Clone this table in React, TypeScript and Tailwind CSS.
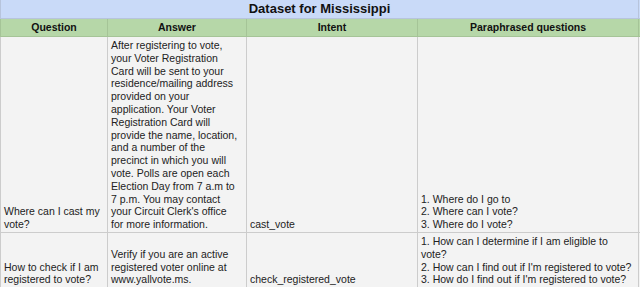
import React from "react";

interface Row {
  question: string;
  answer: string;
  intent: string;
  paraphrased: string[];
  height: string;
}

const rows: Row[] = [
  {
    question: "Where can I cast my vote?",
    answer:
      "After registering to vote, your Voter Registration Card will be sent to your residence/mailing address provided on your application. Your Voter Registration Card will provide the name, location, and a number of the precinct in which you will vote. Polls are open each Election Day from 7 a.m to 7 p.m. You may contact your Circuit Clerk's office for more information.",
    intent: "cast_vote",
    paraphrased: ["1. Where do I go to", "2. Where can I vote?", "3. Where do I vote?"],
    height: "h-[196px]",
  },
  {
    question: "How to check if I am registered to vote?",
    answer:
      "Verify if you are an active registered voter online at www.yallvote.ms.",
    intent: "check_registered_vote",
    paraphrased: [
      "1. How can I determine if I am eligible to vote?",
      "2. How can I find out if I'm registered to vote?",
      "3. How do I find out if I'm registered to vote?",
    ],
    height: "h-[54px]",
  },
];

const cell =
  "border border-[#cccccc] pl-[3px] pr-[4px] pt-[2px] pb-[1px] align-bottom text-left";

export default function App() {
  return (
    <div
      className="w-[640px] h-[287px] overflow-hidden bg-white text-[#222222]"
      style={{ fontFamily: '"Liberation Sans", Arial, sans-serif' }}
    >
      <table className="table-fixed border-collapse w-[678px] -mt-px text-[10.5px] leading-[12.8px]">
        <colgroup>
          <col className="w-[107px]" />
          <col className="w-[139px]" />
          <col className="w-[171px]" />
          <col className="w-[221px]" />
          <col className="w-[40px]" />
        </colgroup>
        <tbody>
          {/* Title */}
          <tr className="h-[19px] bg-[#c9daf8]">
            <td
              colSpan={4}
              className="border border-[#b7c4dc] text-center align-middle font-bold text-[13px] leading-[16px] text-[#111111]"
            >
              Dataset for Mississippi
            </td>
            <td className="border border-[#b7c4dc]" />
          </tr>

          {/* Header */}
          <tr className="h-[18px] bg-[#b6d7a8]">
            {["Question", "Answer", "Intent", "Paraphrased questions"].map(
              (h) => (
                <td
                  key={h}
                  className="border border-[#a5c497] text-center align-middle font-bold text-[#111111]"
                >
                  {h}
                </td>
              )
            )}
            <td className="border border-[#a5c497]" />
          </tr>

          {rows.map((r) => (
            <tr key={r.intent} className={`${r.height} bg-[#f3f3f3]`}>
              <td className={cell}>{r.question}</td>
              <td className={`${cell} pr-[7px]`}>{r.answer}</td>
              <td className={cell}>{r.intent}</td>
              <td className={cell}>
                {r.paraphrased.map((p) => (
                  <div key={p}>{p}</div>
                ))}
              </td>
              <td className={cell} />
            </tr>
          ))}
        </tbody>
      </table>
    </div>
  );
}
